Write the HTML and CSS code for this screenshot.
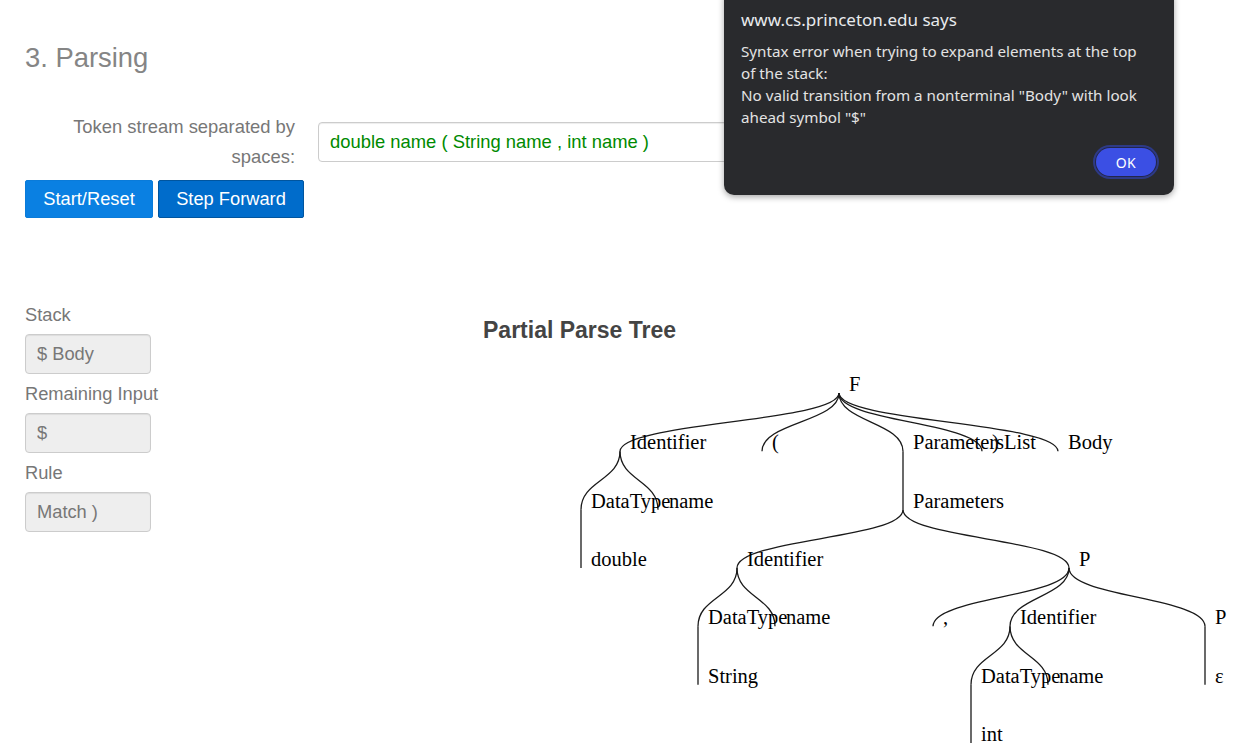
FILE: index.html
```html
<!DOCTYPE html>
<html>
<head>
<meta charset="utf-8">
<title>Parsing</title>
<link rel="stylesheet" href="styles.css">
</head>
<body>
<div class="page">
  <h3 class="title">3. Parsing</h3>
  <div class="form-row">
    <label class="token-label">Token stream separated by spaces:</label>
    <input class="token-input" type="text" value="double name ( String name , int name )">
  </div>
  <div class="buttons">
    <button class="btn btn-start">Start/Reset</button>
    <button class="btn btn-step">Step Forward</button>
  </div>
  <div class="main-row">
    <div class="state-col">
      <div class="field-label">Stack</div>
      <input class="state-input" type="text" value="$ Body" readonly>
      <div class="field-label">Remaining Input</div>
      <input class="state-input" type="text" value="$" readonly>
      <div class="field-label">Rule</div>
      <input class="state-input" type="text" value="Match )" readonly>
    </div>
    <div class="tree-col">
      <h4 class="tree-title">Partial Parse Tree</h4>
      <svg class="tree" width="752" height="400" viewBox="0 0 752 400">
        <g transform="translate(-483 -360)">
          <g class="links">
            <path d="M839,393 C839,422.17 620,422.17 620,451.33"/>
            <path d="M839,393 C839,422.17 762,422.17 762,451.33"/>
            <path d="M839,393 C839,422.17 903,422.17 903,451.33"/>
            <path d="M839,393 C839,422.17 982,422.17 982,451.33"/>
            <path d="M839,393 C839,422.17 1058,422.17 1058,451.33"/>
            <path d="M620,451.33 C620,480.5 581,480.5 581,509.67"/>
            <path d="M620,451.33 C620,480.5 658,480.5 658,509.67"/>
            <path d="M581,509.67 L581,568"/>
            <path d="M903,451.33 L903,509.67"/>
            <path d="M903,509.67 C903,538.83 737,538.83 737,568"/>
            <path d="M903,509.67 C903,538.83 1069,538.83 1069,568"/>
            <path d="M737,568 C737,597.17 698,597.17 698,626.33"/>
            <path d="M737,568 C737,597.17 775,597.17 775,626.33"/>
            <path d="M698,626.33 L698,684.67"/>
            <path d="M1069,568 C1069,597.17 933,597.17 933,626.33"/>
            <path d="M1069,568 C1069,597.17 1010,597.17 1010,626.33"/>
            <path d="M1069,568 C1069,597.17 1205,597.17 1205,626.33"/>
            <path d="M1010,626.33 C1010,655.5 971,655.5 971,684.67"/>
            <path d="M1010,626.33 C1010,655.5 1048,655.5 1048,684.67"/>
            <path d="M971,684.67 L971,743"/>
            <path d="M1205,626.33 L1205,684.67"/>
          </g>
          <g class="labels">
            <text x="849" y="391">F</text>
            <text x="630" y="449.3">Identifier</text>
            <text x="772" y="449.3">(</text>
            <text x="913" y="449.3">ParametersList</text>
            <text x="992" y="449.3">)</text>
            <text x="1068" y="449.3">Body</text>
            <text x="591" y="507.7">DataType</text>
            <text x="669" y="507.7">name</text>
            <text x="913" y="507.7">Parameters</text>
            <text x="591" y="566">double</text>
            <text x="747" y="566">Identifier</text>
            <text x="1079" y="566">P</text>
            <text x="708" y="624.3">DataType</text>
            <text x="786" y="624.3">name</text>
            <text x="943" y="624.3">,</text>
            <text x="1020" y="624.3">Identifier</text>
            <text x="1215" y="624.3">P</text>
            <text x="708" y="682.7">String</text>
            <text x="981" y="682.7">DataType</text>
            <text x="1059" y="682.7">name</text>
            <text x="1215" y="682.7">ε</text>
            <text x="981" y="741">int</text>
          </g>
        </g>
      </svg>
    </div>
  </div>
</div>
<div class="dialog">
  <div class="dialog-title">www.cs.princeton.edu says</div>
  <div class="dialog-msg">Syntax error when trying to expand elements at the top<br>of the stack:<br>No valid transition from a nonterminal "Body" with look<br>ahead symbol "$"</div>
  <div class="dialog-actions"><button class="ok-btn">OK</button></div>
</div>
</body>
</html>
```

FILE: styles.css
```css
html, body {
  margin: 0;
  padding: 0;
  background: #fff;
}
body {
  font-family: "Liberation Sans", Arial, sans-serif;
  color: #333;
  overflow: hidden;
}
.page {
  padding-left: 25px;
}
.title {
  margin: 43px 0 0;
  font-size: 27.4px;
  line-height: 30px;
  font-weight: 400;
  color: #858585;
}
.form-row {
  display: flex;
  align-items: flex-start;
  margin-top: 39px;
}
.token-label {
  width: 270px;
  text-align: right;
  font-size: 18.4px;
  line-height: 30px;
  color: #777;
}
.token-input {
  margin: 10px 0 0 23px;
  width: 800px;
  height: 40px;
  box-sizing: border-box;
  border: 1px solid #ccc;
  border-radius: 4px;
  padding: 0 11px;
  font-family: "Liberation Sans", Arial, sans-serif;
  font-size: 18.4px;
  color: #008a00;
  background: #fff;
  box-shadow: inset 0 1px 1px rgba(0,0,0,0.075);
}
.buttons {
  display: flex;
  gap: 5px;
  margin-top: 8px;
}
.btn {
  height: 38px;
  padding: 0 17px;
  font-family: "Liberation Sans", Arial, sans-serif;
  font-size: 18.3px;
  color: #fff;
  border-radius: 2px;
  border: 1px solid;
  cursor: pointer;
}
.btn-start {
  width: 128px;
  background: #0a80e2;
  border-color: #0a7bd9;
}
.btn-step {
  width: 146px;
  background: #006ccb;
  border-color: #00559f;
}
.main-row {
  display: flex;
  margin-top: 84px;
}
.state-col {
  width: 458px;
  display: flex;
  flex-direction: column;
  align-items: flex-start;
}
.field-label {
  font-size: 18.3px;
  line-height: 26px;
  margin-bottom: 6px;
  color: #777;
}
.state-input {
  width: 126px;
  height: 40px;
  box-sizing: border-box;
  margin-bottom: 7px;
  border: 1px solid #ccc;
  border-radius: 4px;
  padding: 0 11px;
  background: #eee;
  font-family: "Liberation Sans", Arial, sans-serif;
  font-size: 18.3px;
  color: #777;
  box-shadow: inset 0 1px 1px rgba(0,0,0,0.075);
}
.tree-col {
  flex: 1;
}
.tree-title {
  margin: 15px 0 0;
  font-size: 23px;
  line-height: 26px;
  font-weight: 700;
  color: #444;
}
.tree {
  display: block;
  margin-top: 17px;
  overflow: visible;
}
.links path {
  fill: none;
  stroke: #1a1a1a;
  stroke-width: 1.3px;
}
.labels text {
  font-family: "Liberation Serif", "Times New Roman", serif;
  font-size: 20.5px;
  fill: #000;
}
.dialog {
  position: absolute;
  left: 724px;
  top: -12px;
  width: 450px;
  height: 207px;
  box-sizing: border-box;
  padding: 20px 17px 0;
  background: #292a2d;
  border-radius: 10px;
  box-shadow: 0 2px 6px rgba(0,0,0,0.35);
  font-family: "Noto Sans", "Open Sans", sans-serif;
  color: #e8eaed;
}
.dialog-title {
  font-size: 17px;
  line-height: 24px;
}
.dialog-msg {
  margin-top: 8px;
  font-size: 15.2px;
  line-height: 22px;
  color: #e3e3e3;
}
.dialog-actions {
  display: flex;
  justify-content: flex-end;
  margin-top: 20px;
  padding-right: 1px;
}
.ok-btn {
  width: 60px;
  height: 28px;
  border: none;
  border-radius: 14px;
  background: #3b4fe4;
  color: #fff;
  font-family: "Noto Sans", "Open Sans", sans-serif;
  font-size: 14px;
  letter-spacing: 0.5px;
  box-shadow: 0 0 0 1px #23264a, 0 0 0 3px #2d3a86;
}
```
